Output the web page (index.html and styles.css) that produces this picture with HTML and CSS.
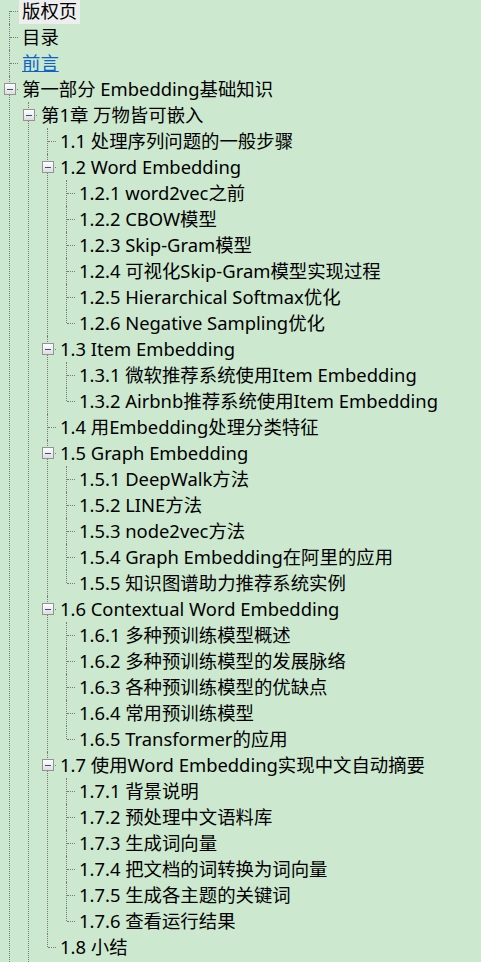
FILE: index.html
```html
<!DOCTYPE html>
<html lang="zh-CN">
<head>
<meta charset="utf-8">
<title>目录</title>
<link rel="stylesheet" href="styles.css">
</head>
<body>
<ul class="tree">
  <li class="node first"><div class="row"><span class="label selected">版权页</span></div></li>
  <li class="node"><div class="row"><span class="label">目录</span></div></li>
  <li class="node"><div class="row"><span class="label link">前言</span></div></li>
  <li class="node more">
    <div class="row"><span class="toggle"></span><span class="label">第一部分 Embedding基础知识</span></div>
    <ul class="children">
      <li class="node more">
        <div class="row"><span class="toggle"></span><span class="label">第1章 万物皆可嵌入</span></div>
        <ul class="children">
          <li class="node"><div class="row"><span class="label">1.1 处理序列问题的一般步骤</span></div></li>
          <li class="node">
            <div class="row"><span class="toggle"></span><span class="label">1.2 Word Embedding</span></div>
            <ul class="children">
              <li class="node"><div class="row"><span class="label">1.2.1 word2vec之前</span></div></li>
              <li class="node"><div class="row"><span class="label">1.2.2 CBOW模型</span></div></li>
              <li class="node"><div class="row"><span class="label">1.2.3 Skip-Gram模型</span></div></li>
              <li class="node"><div class="row"><span class="label">1.2.4 可视化Skip-Gram模型实现过程</span></div></li>
              <li class="node"><div class="row"><span class="label">1.2.5 Hierarchical Softmax优化</span></div></li>
              <li class="node"><div class="row"><span class="label">1.2.6 Negative Sampling优化</span></div></li>
            </ul>
          </li>
          <li class="node">
            <div class="row"><span class="toggle"></span><span class="label">1.3 Item Embedding</span></div>
            <ul class="children">
              <li class="node"><div class="row"><span class="label">1.3.1 微软推荐系统使用Item Embedding</span></div></li>
              <li class="node"><div class="row"><span class="label">1.3.2 Airbnb推荐系统使用Item Embedding</span></div></li>
            </ul>
          </li>
          <li class="node"><div class="row"><span class="label">1.4 用Embedding处理分类特征</span></div></li>
          <li class="node">
            <div class="row"><span class="toggle"></span><span class="label">1.5 Graph Embedding</span></div>
            <ul class="children">
              <li class="node"><div class="row"><span class="label">1.5.1 DeepWalk方法</span></div></li>
              <li class="node"><div class="row"><span class="label">1.5.2 LINE方法</span></div></li>
              <li class="node"><div class="row"><span class="label">1.5.3 node2vec方法</span></div></li>
              <li class="node"><div class="row"><span class="label">1.5.4 Graph Embedding在阿里的应用</span></div></li>
              <li class="node"><div class="row"><span class="label">1.5.5 知识图谱助力推荐系统实例</span></div></li>
            </ul>
          </li>
          <li class="node">
            <div class="row"><span class="toggle"></span><span class="label">1.6 Contextual Word Embedding</span></div>
            <ul class="children">
              <li class="node"><div class="row"><span class="label">1.6.1 多种预训练模型概述</span></div></li>
              <li class="node"><div class="row"><span class="label">1.6.2 多种预训练模型的发展脉络</span></div></li>
              <li class="node"><div class="row"><span class="label">1.6.3 各种预训练模型的优缺点</span></div></li>
              <li class="node"><div class="row"><span class="label">1.6.4 常用预训练模型</span></div></li>
              <li class="node"><div class="row"><span class="label">1.6.5 Transformer的应用</span></div></li>
            </ul>
          </li>
          <li class="node">
            <div class="row"><span class="toggle"></span><span class="label">1.7 使用Word Embedding实现中文自动摘要</span></div>
            <ul class="children">
              <li class="node"><div class="row"><span class="label">1.7.1 背景说明</span></div></li>
              <li class="node"><div class="row"><span class="label">1.7.2 预处理中文语料库</span></div></li>
              <li class="node"><div class="row"><span class="label">1.7.3 生成词向量</span></div></li>
              <li class="node"><div class="row"><span class="label">1.7.4 把文档的词转换为词向量</span></div></li>
              <li class="node"><div class="row"><span class="label">1.7.5 生成各主题的关键词</span></div></li>
              <li class="node"><div class="row"><span class="label">1.7.6 查看运行结果</span></div></li>
            </ul>
          </li>
          <li class="node"><div class="row"><span class="label">1.8 小结</span></div></li>
        </ul>
      </li>
    </ul>
  </li>
</ul>
</body>
</html>
```
FILE: styles.css
```css
html, body {
  margin: 0;
  padding: 0;
  background: #cce8cf;
}
body {
  font-family: "Noto Sans", "Noto Sans CJK SC", sans-serif;
  font-size: 18.4px;
  color: #000;
  overflow: hidden;
}
.tree {
  list-style: none;
  margin: 0;
  padding: 0;
}
.children {
  list-style: none;
  margin: 0;
  padding: 0 0 0 19px;
}
.node {
  position: relative;
}
.node::before {
  content: "";
  position: absolute;
  left: 9px;
  top: 0;
  bottom: 0;
  border-left: 1px dotted #7a7a7a;
}
.node.first::before {
  top: 11px;
}
.node:last-child::before {
  bottom: auto;
  height: 13px;
}
.node.more::before {
  bottom: 0;
  height: auto;
}
.node.more {
  padding-bottom: 40px;
}
.row {
  position: relative;
  height: 26px;
  display: flex;
  align-items: flex-start;
  padding-left: 19px;
}
.row::before {
  content: "";
  position: absolute;
  left: 10px;
  top: 13px;
  width: 8px;
  border-top: 1px dotted #7a7a7a;
}
.first .row {
  height: 24px;
}
.first .row::before {
  top: 11px;
}
.toggle {
  position: relative;
  z-index: 1;
  box-sizing: border-box;
  width: 12px;
  height: 12px;
  margin: 7px 3px 0 -15px;
  border: 1px solid #939393;
  background: linear-gradient(#ffffff, #dedede);
}
.toggle::after {
  content: "";
  position: absolute;
  left: 2px;
  right: 2px;
  top: 5px;
  height: 1px;
  background: #34508a;
}
.label {
  display: block;
  padding: 0 3px;
  height: 26px;
  line-height: 26px;
  white-space: nowrap;
}
.first .label {
  height: 24px;
  line-height: 22px;
}
.selected {
  background: #eeeeee;
}
.link {
  color: #0b62c8;
  text-decoration: underline;
}
```
